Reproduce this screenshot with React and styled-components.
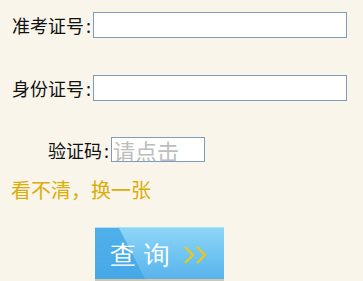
import React from "react";
import styled, { createGlobalStyle } from "styled-components";

const Global = createGlobalStyle`
  html, body { margin: 0; padding: 0; background: #f9f5ea; }
  body { font-family: "Noto Sans CJK SC", "Noto Sans", sans-serif; }
`;

const Page = styled.div`
  width: 363px;
  height: 281px;
  background: #f9f5ea;
  box-sizing: border-box;
  padding-top: 12px;
  display: flex;
  flex-direction: column;
  overflow: hidden;
`;

const Row = styled.div`
  display: flex;
  align-items: center;
  margin-top: ${(p) => p.$top || 0}px;
  padding-left: ${(p) => p.$indent}px;
  height: ${(p) => p.$h}px;
`;

const Label = styled.span`
  font-size: 18px;
  line-height: 20px;
  color: #111;
  white-space: nowrap;
  display: inline-flex;
  align-items: center;
`;

const Colon = styled.span`
  display: inline-block;
  width: 9px;
  text-align: center;
`;

const TextInput = styled.input`
  box-sizing: border-box;
  width: ${(p) => p.$w}px;
  height: ${(p) => p.$h}px;
  border: 1px solid #7f9db9;
  background: #fff;
  margin: 0;
  padding: 0 0 0 1px;
  font-family: "Noto Sans CJK SC", sans-serif;
  font-size: ${(p) => p.$fs || 14}px;
  outline: none;
  &::placeholder {
    color: #bdbdbd;
  }
`;

const Refresh = styled.div`
  margin-top: 16px;
  padding-left: 11px;
  font-size: 20px;
  line-height: 24px;
  color: #d8ae0a;
`;

const ButtonWrap = styled.div`
  margin-top: 25px;
  padding-left: 95px;
`;

const QueryButton = styled.button`
  position: relative;
  width: 129px;
  height: 52px;
  border: none;
  padding: 0 0 0 15px;
  margin: 0;
  display: flex;
  align-items: center;
  cursor: pointer;
  background: linear-gradient(180deg, #8fd6f7 0%, #6ec3f1 55%, #58b3ec 100%);
  box-shadow: 0 2px 0 #cfc6b3;
  overflow: hidden;
  border-top: 1px solid #a9e2fb;
`;

const Shade = styled.span`
  position: absolute;
  inset: 0;
  background: linear-gradient(180deg, #4fb0ea 0%, #46a8e6 100%);
  clip-path: polygon(0 0, 24px 0, 50px 100%, 0 100%);
`;

const BtnText = styled.span`
  position: relative;
  color: #fff;
  font-size: 26px;
  font-weight: 500;
  line-height: 30px;
  display: flex;
  gap: 8px;
  margin-top: 2px;
`;

const Arrows = styled.svg`
  position: relative;
  margin-left: 14px;
  margin-top: 2px;
`;

export default function App() {
  return (
    <Page>
      <Global />
      <Row $indent={12} $h={26}>
        <Label>
          准考证号<Colon>:</Colon>
        </Label>
        <TextInput $w={254} $h={26} />
      </Row>
      <Row $indent={12} $h={26} $top={37}>
        <Label>
          身份证号<Colon>:</Colon>
        </Label>
        <TextInput $w={254} $h={26} />
      </Row>
      <Row $indent={48} $h={25} $top={36}>
        <Label>
          验证码<Colon>:</Colon>
        </Label>
        <TextInput $w={94} $h={25} $fs={22} placeholder="请点击" />
      </Row>
      <Refresh>看不清，换一张</Refresh>
      <ButtonWrap>
        <QueryButton>
          <Shade />
          <BtnText>
            <span>查</span>
            <span>询</span>
          </BtnText>
          <Arrows width="24" height="18" viewBox="0 0 24 18">
            <path d="M1 1 L9 9 L1 17" fill="none" stroke="#f7c800" strokeWidth="2" />
            <path d="M13 1 L21 9 L13 17" fill="none" stroke="#f7c800" strokeWidth="2" />
          </Arrows>
        </QueryButton>
      </ButtonWrap>
    </Page>
  );
}
